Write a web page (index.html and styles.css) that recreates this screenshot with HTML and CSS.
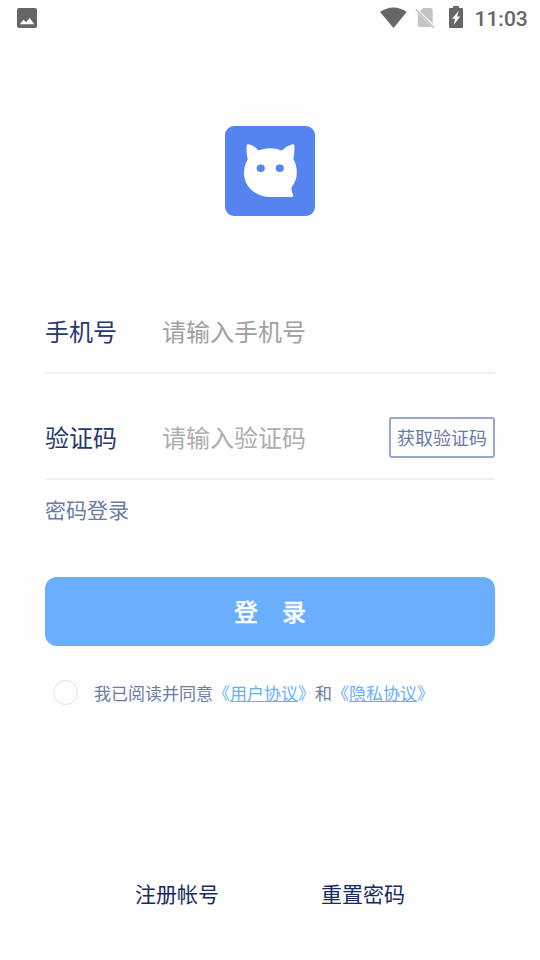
FILE: index.html
```html
<!DOCTYPE html>
<html lang="zh-CN">
<head>
<meta charset="utf-8">
<title>登录</title>
<link rel="stylesheet" href="styles.css">
</head>
<body>
<header class="status">
  <svg class="status-photo" width="20" height="20" viewBox="0 0 20 20"><path fill="#666" fill-rule="evenodd" d="M2 0H18Q20 0 20 2V18Q20 20 18 20H2Q0 20 0 18V2Q0 0 2 0ZM2.7 16.3H17.2L12.7 10L9.2 14.3L6.6 11.8Z"/></svg>
  <svg class="status-wifi" width="28" height="22" viewBox="0 0 28 22"><path fill="#666" d="M0 5Q6.5 .5 13.5 .5T26.7 5L13.5 21Z"/></svg>
  <svg class="status-sim" width="20" height="22" viewBox="0 0 20 22"><path fill="#c4c4c4" d="M8.2 1H16Q17.7 1 17.7 3V16.6L4.9 4.2ZM2.8 5.7L17 20H4.8Q2.8 20 2.8 18Z"/><path d="M.9 2.2L19 20.9" stroke="#c4c4c4" stroke-width="1.6"/></svg>
  <svg class="status-battery" width="14" height="22" viewBox="0 0 14 22"><path fill="#666" fill-rule="evenodd" d="M4 0H10V2H13Q14 2 14 3V21Q14 22 13 22H1Q0 22 0 21V3Q0 2 1 2H4ZM9.8 4.7L3 12.8H6.2L4.6 19L11.2 10.4H8Z"/></svg>
  <span class="status-time">11:03</span>
</header>
<main class="login">
  <svg class="logo" width="90" height="90" viewBox="0 0 90 90">
    <rect width="90" height="90" rx="9" fill="#5584f1"/>
    <path fill="#fff" d="M21.7 19.2Q22 17.7 24 18.3Q29.8 20.2 33.5 24.4Q45 20.3 57 24.4Q61.5 20 67.2 18.3Q69.2 17.8 69.3 19.5Q69.8 27 68.3 33Q71.7 38.5 71.8 46.5Q71.9 54.5 66.5 61.5Q66.2 65 68 68.5Q68.7 71 66.3 71H46C30 71 19 60.5 19 46.8Q19 39.5 22.7 33.5Q21.1 27 21.7 19.2Z"/>
    <ellipse cx="35.7" cy="42.2" rx="4.1" ry="3.7" fill="#5584f1"/>
    <ellipse cx="54.8" cy="42.2" rx="4.1" ry="3.7" fill="#5584f1"/>
  </svg>
  <div class="field field-phone">
    <span class="label">手机号</span><span class="hint">请输入手机号</span>
  </div>
  <div class="field field-code">
    <span class="label">验证码</span><span class="hint hint-code">请输入验证码</span>
    <button class="send">获取验证码</button>
  </div>
  <div class="switch">密码登录</div>
  <button class="submit">登　录</button>
  <div class="agree"><span class="radio"></span><span class="terms">我已阅读并同意<span class="link">《<u>用户协议</u>》</span>和<span class="link">《<u>隐私协议</u>》</span></span></div>
</main>
<footer class="links"><span>注册帐号</span><span>重置密码</span></footer>
</body>
</html>
```
FILE: styles.css
```css
* { box-sizing: border-box; }
body {
  margin: 0;
  height: 960px;
  display: flex;
  flex-direction: column;
  background: #fefefe;
  font-family: "Noto Sans CJK SC", sans-serif;
}
button { font-family: inherit; padding: 0; }
svg { display: block; flex: none; }
.status {
  height: 36px;
  display: flex;
  align-items: center;
  padding: 0 12px 0 17px;
}
.status-wifi { margin-left: auto; }
.status-sim { margin-left: 7px; }
.status-battery { margin: 0 11.5px 0 14px; position: relative; top: -1px; }
.status-time {
  width: 53.5px;
  white-space: nowrap;
  font: 500 21px/36px Roboto, sans-serif;
  color: #666;
  padding-top: 1px;
}
.login {
  flex: 1;
  padding: 90px 45px 0;
  display: flex;
  flex-direction: column;
}
.logo { align-self: center; }
.field {
  display: flex;
  align-items: center;
  border-bottom: 2px solid #eef1f5;
  padding-bottom: 2px;
  font-size: 24px;
  line-height: 36px;
}
.field-phone { height: 82px; margin-top: 76px; }
.field-code { height: 82px; margin-top: 24px; }
.label { width: 117px; color: #26396d; }
.hint { color: #a0a0a0; }
.hint-code { color: #adadad; }
.send {
  width: 106px;
  height: 41px;
  margin-left: auto;
  border: 2px solid #99a8c8;
  border-radius: 3px;
  background: transparent;
  color: #6b7ba5;
  font-size: 18px;
  line-height: 37px;
}
.switch { margin-top: 13px; font-size: 21px; line-height: 32px; color: #6b7ba5; }
.submit {
  height: 69px;
  margin-top: 52px;
  border: 0;
  border-radius: 12px;
  background: #69aeff;
  color: #fff;
  font-size: 24px;
  font-weight: 500;
  -webkit-text-stroke: .3px #fff;
  line-height: 67px;
  padding-bottom: 2px;
}
.agree {
  display: flex;
  align-items: flex-start;
  height: 26px;
  margin-top: 34px;
  padding-left: 8px;
  font-size: 17px;
  line-height: 26px;
  color: #6b7ba5;
}
.radio { width: 25px; height: 25px; border: 1px solid #e2e2e2; border-radius: 50%; margin-right: 16px; }
.link { color: #69aeff; }
.links {
  height: 90px;
  display: flex;
  justify-content: center;
  gap: 102px;
  padding-top: 7px;
  font-size: 21px;
  line-height: 32px;
  color: #172b60;
}
```
